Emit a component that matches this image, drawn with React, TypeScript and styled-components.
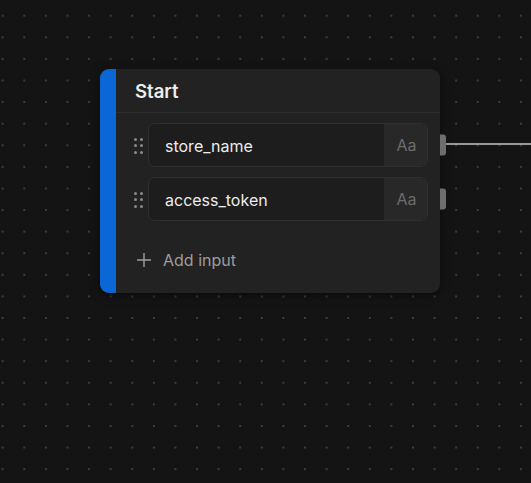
import React from "react";
import styled, { createGlobalStyle } from "styled-components";

const Global = createGlobalStyle`
  html, body { margin: 0; padding: 0; background: #141414; }
  body { font-family: Inter, "Noto Sans", "Liberation Sans", sans-serif; }
  * { box-sizing: border-box; }
`;

const Canvas = styled.div`
  position: relative;
  width: 531px;
  height: 483px;
  overflow: hidden;
  background-color: #141414;
  background-image: radial-gradient(circle at center, #3d3d3d 0.9px, transparent 1.3px);
  background-size: 21.6px 21.6px;
  background-position: -8.1px 4.9px;
`;

const Edge = styled.svg`
  position: absolute;
  left: 446px;
  top: 140px;
`;

const Node = styled.div`
  position: absolute;
  left: 100px;
  top: 69px;
  width: 340px;
  display: flex;
  border-radius: 9px;
  background: #222222;
  box-shadow: 0 2px 10px rgba(0, 0, 0, 0.55);
`;

const Accent = styled.div`
  width: 16px;
  flex: none;
  background: #0b66d6;
  border-radius: 9px 0 0 9px;
`;

const Body = styled.div`
  flex: 1;
  display: flex;
  flex-direction: column;
  min-width: 0;
`;

const Header = styled.div`
  height: 44px;
  display: flex;
  align-items: center;
  padding-left: 19px;
  border-bottom: 1px solid #2d2d2d;
  color: #ededed;
  font-size: 18.5px;
  font-weight: 600;
`;

const Fields = styled.div`
  display: flex;
  flex-direction: column;
  gap: 10px;
  padding: 10px 12px 0 18px;
`;

const Row = styled.div`
  position: relative;
  display: flex;
  align-items: center;
  gap: 6px;
`;

const Grip = styled.div`
  width: 8px;
  display: grid;
  grid-template-columns: repeat(2, 3px);
  column-gap: 2.5px;
  row-gap: 3.5px;
  margin-top: 1px;
`;

const GripDot = styled.span`
  width: 3px;
  height: 3px;
  border-radius: 50%;
  background: #8a8a8a;
`;

const InputBox = styled.div`
  flex: 1;
  height: 44px;
  display: flex;
  border: 1px solid #2f2f2f;
  border-radius: 7px;
  background: #1d1d1d;
  overflow: hidden;
`;

const Name = styled.div`
  flex: 1;
  display: flex;
  align-items: center;
  padding-left: 16px;
  padding-top: 1px;
  color: #ececec;
  font-size: 16px;
`;

const TypeTag = styled.div`
  width: 43px;
  display: flex;
  align-items: center;
  justify-content: center;
  padding-left: 2px;
  background: #282828;
  color: #6c6c6c;
  font-size: 16px;
`;

const Handle = styled.div`
  position: absolute;
  right: -18px;
  top: 50%;
  transform: translateY(-50%);
  margin-top: -0.5px;
  width: 6px;
  height: 21px;
  border-radius: 0 3px 3px 0;
  background: #6e6e6e;
`;

const AddRow = styled.div`
  height: 40px;
  margin: 19px 0 13px;
  display: flex;
  align-items: center;
  gap: 11px;
  padding-left: 20px;
  color: #9c9c9c;
  font-size: 16px;
`;

const PlusIcon = () => (
  <svg width="16" height="16" viewBox="0 0 16 16">
    <path d="M8 1v14M1 8h14" stroke="#a0a0a0" strokeWidth="1.4" fill="none" />
  </svg>
);

const inputs = ["store_name", "access_token"];

export default function App() {
  return (
    <>
      <Global />
      <Canvas>
        <Edge width="85" height="8">
          <line x1="0" y1="4" x2="85" y2="4" stroke="#c4c4c4" strokeWidth="1.3" />
        </Edge>
        <Node>
          <Accent />
          <Body>
            <Header>Start</Header>
            <Fields>
              {inputs.map((n) => (
                <Row key={n}>
                  <Grip>
                    {Array.from({ length: 6 }).map((_, i) => (
                      <GripDot key={i} />
                    ))}
                  </Grip>
                  <InputBox>
                    <Name>{n}</Name>
                    <TypeTag>Aa</TypeTag>
                  </InputBox>
                  <Handle />
                </Row>
              ))}
            </Fields>
            <AddRow>
              <PlusIcon />
              Add input
            </AddRow>
          </Body>
        </Node>
      </Canvas>
    </>
  );
}
